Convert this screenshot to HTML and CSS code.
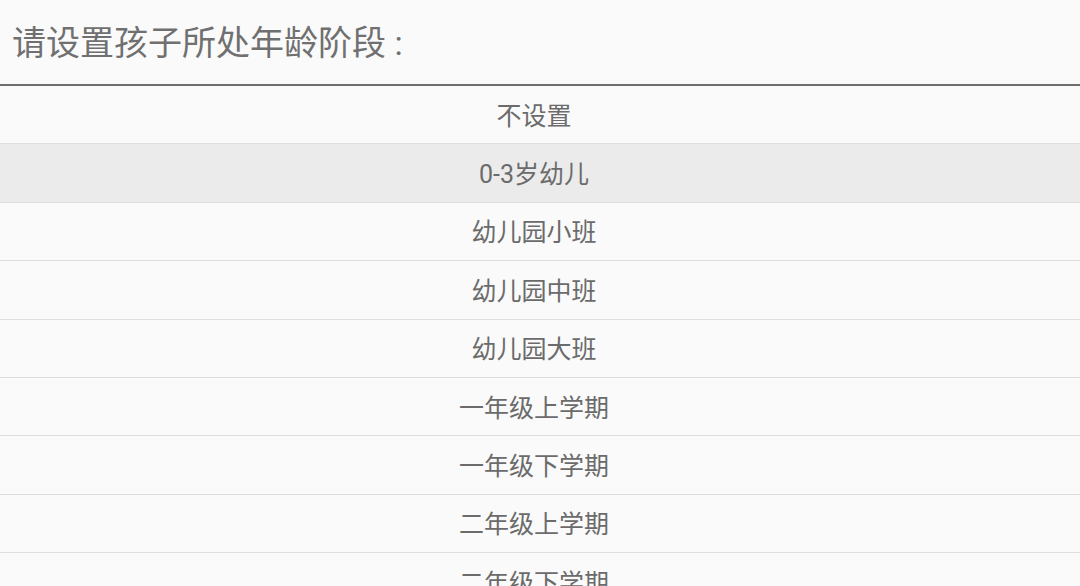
FILE: index.html
```html
<!DOCTYPE html>
<html lang="zh-CN">
  <head>
    <meta charset="UTF-8" />
    <title>年龄阶段</title>
    <link rel="stylesheet" href="styles.css">
  </head>
  <body>
    <div class="dialog">
      <div class="dialog-title">请设置孩子所处年龄阶段 :</div>
      <ul class="options">
        <li class="option">不设置</li>
        <li class="option selected">0-3岁幼儿</li>
        <li class="option">幼儿园小班</li>
        <li class="option">幼儿园中班</li>
        <li class="option">幼儿园大班</li>
        <li class="option">一年级上学期</li>
        <li class="option">一年级下学期</li>
        <li class="option">二年级上学期</li>
        <li class="option">二年级下学期</li>
      </ul>
    </div>
  </body>
</html>
```

FILE: styles.css
```css
body {
  margin: 0;
  background-color: #fafafa;
  font-family: Roboto, "Noto Sans CJK SC", sans-serif;
  color: #6b6b6b;
  height: 586px;
  overflow: hidden;
}
.dialog-title {
  height: 86px;
  box-sizing: border-box;
  padding-left: 12px;
  padding-bottom: 4px;
  display: flex;
  align-items: center;
  font-size: 34px;
  color: #707070;
  border-bottom: 2px solid #6e6e6e;
}
.options {
  list-style-type: none;
  margin: 0;
  padding: 0;
}
.option {
  height: 58.4px;
  box-sizing: border-box;
  border-bottom: 1px solid #dedede;
  padding: 0 12px 2px 0;
  display: flex;
  justify-content: center;
  align-items: center;
  font-size: 25px;
}
.option.selected {
  background-color: #ebebeb;
}
```
